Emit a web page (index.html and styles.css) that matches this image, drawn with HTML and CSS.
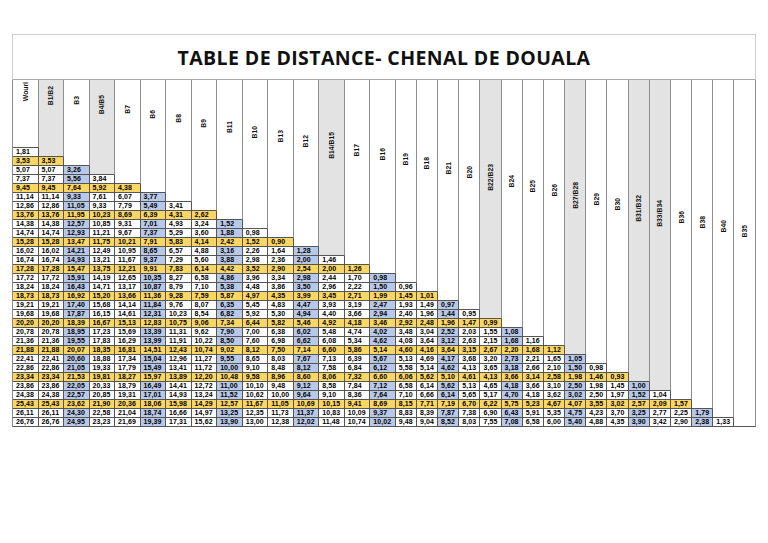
FILE: index.html
```html
<!DOCTYPE html>
<html lang="fr">
<head>
<meta charset="utf-8">
<title>Table de distance - Chenal de Douala</title>
<link rel="stylesheet" href="styles.css">
</head>
<body>
<div class="sheet">
  <div class="title">TABLE DE DISTANCE- CHENAL DE DOUALA</div>
  <div class="grid">
    <div class="h" style="--k:1"><span>Wouri</span></div>
    <div class="h g" style="--k:2"><span>B1/B2</span></div>
    <div class="h" style="--k:3"><span>B3</span></div>
    <div class="h g" style="--k:4"><span>B4/B5</span></div>
    <div class="h" style="--k:5"><span>B7</span></div>
    <div class="h" style="--k:6"><span>B6</span></div>
    <div class="h" style="--k:7"><span>B8</span></div>
    <div class="h" style="--k:8"><span>B9</span></div>
    <div class="h" style="--k:9"><span>B11</span></div>
    <div class="h" style="--k:10"><span>B10</span></div>
    <div class="h" style="--k:11"><span>B13</span></div>
    <div class="h" style="--k:12"><span>B12</span></div>
    <div class="h g" style="--k:13"><span>B14/B15</span></div>
    <div class="h" style="--k:14"><span>B17</span></div>
    <div class="h" style="--k:15"><span>B16</span></div>
    <div class="h" style="--k:16"><span>B19</span></div>
    <div class="h" style="--k:17"><span>B18</span></div>
    <div class="h" style="--k:18"><span>B21</span></div>
    <div class="h" style="--k:19"><span>B20</span></div>
    <div class="h g" style="--k:20"><span>B22/B23</span></div>
    <div class="h" style="--k:21"><span>B24</span></div>
    <div class="h" style="--k:22"><span>B25</span></div>
    <div class="h" style="--k:23"><span>B26</span></div>
    <div class="h g" style="--k:24"><span>B27/B28</span></div>
    <div class="h" style="--k:25"><span>B29</span></div>
    <div class="h" style="--k:26"><span>B30</span></div>
    <div class="h g" style="--k:27"><span>B31/B32</span></div>
    <div class="h g" style="--k:28"><span>B33/B34</span></div>
    <div class="h" style="--k:29"><span>B36</span></div>
    <div class="h" style="--k:30"><span>B38</span></div>
    <div class="h" style="--k:31"><span>B40</span></div>
    <div class="h" style="--k:32"><span>B35</span></div>

    <div class="row"><span>1,81</span></div>
    <div class="row y"><span>3,53</span><span>3,53</span></div>
    <div class="row"><span>5,07</span><span>5,07</span><span>3,26</span></div>
    <div class="row"><span>7,37</span><span>7,37</span><span>5,56</span><span>3,84</span></div>
    <div class="row y"><span>9,45</span><span>9,45</span><span>7,64</span><span>5,92</span><span>4,38</span></div>
    <div class="row"><span>11,14</span><span>11,14</span><span>9,33</span><span>7,61</span><span>6,07</span><span>3,77</span></div>
    <div class="row"><span>12,86</span><span>12,86</span><span>11,05</span><span>9,33</span><span>7,79</span><span>5,49</span><span>3,41</span></div>
    <div class="row y"><span>13,76</span><span>13,76</span><span>11,95</span><span>10,23</span><span>8,69</span><span>6,39</span><span>4,31</span><span>2,62</span></div>
    <div class="row"><span>14,38</span><span>14,38</span><span>12,57</span><span>10,85</span><span>9,31</span><span>7,01</span><span>4,93</span><span>3,24</span><span>1,52</span></div>
    <div class="row"><span>14,74</span><span>14,74</span><span>12,93</span><span>11,21</span><span>9,67</span><span>7,37</span><span>5,29</span><span>3,60</span><span>1,88</span><span>0,98</span></div>
    <div class="row y"><span>15,28</span><span>15,28</span><span>13,47</span><span>11,75</span><span>10,21</span><span>7,91</span><span>5,83</span><span>4,14</span><span>2,42</span><span>1,52</span><span>0,90</span></div>
    <div class="row"><span>16,02</span><span>16,02</span><span>14,21</span><span>12,49</span><span>10,95</span><span>8,65</span><span>6,57</span><span>4,88</span><span>3,16</span><span>2,26</span><span>1,64</span><span>1,28</span></div>
    <div class="row"><span>16,74</span><span>16,74</span><span>14,93</span><span>13,21</span><span>11,67</span><span>9,37</span><span>7,29</span><span>5,60</span><span>3,88</span><span>2,98</span><span>2,36</span><span>2,00</span><span>1,46</span></div>
    <div class="row y"><span>17,28</span><span>17,28</span><span>15,47</span><span>13,75</span><span>12,21</span><span>9,91</span><span>7,83</span><span>6,14</span><span>4,42</span><span>3,52</span><span>2,90</span><span>2,54</span><span>2,00</span><span>1,26</span></div>
    <div class="row"><span>17,72</span><span>17,72</span><span>15,91</span><span>14,19</span><span>12,65</span><span>10,35</span><span>8,27</span><span>6,58</span><span>4,86</span><span>3,96</span><span>3,34</span><span>2,98</span><span>2,44</span><span>1,70</span><span>0,98</span></div>
    <div class="row"><span>18,24</span><span>18,24</span><span>16,43</span><span>14,71</span><span>13,17</span><span>10,87</span><span>8,79</span><span>7,10</span><span>5,38</span><span>4,48</span><span>3,86</span><span>3,50</span><span>2,96</span><span>2,22</span><span>1,50</span><span>0,96</span></div>
    <div class="row y"><span>18,73</span><span>18,73</span><span>16,92</span><span>15,20</span><span>13,66</span><span>11,36</span><span>9,28</span><span>7,59</span><span>5,87</span><span>4,97</span><span>4,35</span><span>3,99</span><span>3,45</span><span>2,71</span><span>1,99</span><span>1,45</span><span>1,01</span></div>
    <div class="row"><span>19,21</span><span>19,21</span><span>17,40</span><span>15,68</span><span>14,14</span><span>11,84</span><span>9,76</span><span>8,07</span><span>6,35</span><span>5,45</span><span>4,83</span><span>4,47</span><span>3,93</span><span>3,19</span><span>2,47</span><span>1,93</span><span>1,49</span><span>0,97</span></div>
    <div class="row"><span>19,68</span><span>19,68</span><span>17,87</span><span>16,15</span><span>14,61</span><span>12,31</span><span>10,23</span><span>8,54</span><span>6,82</span><span>5,92</span><span>5,30</span><span>4,94</span><span>4,40</span><span>3,66</span><span>2,94</span><span>2,40</span><span>1,96</span><span>1,44</span><span>0,95</span></div>
    <div class="row y"><span>20,20</span><span>20,20</span><span>18,39</span><span>16,67</span><span>15,13</span><span>12,83</span><span>10,75</span><span>9,06</span><span>7,34</span><span>6,44</span><span>5,82</span><span>5,46</span><span>4,92</span><span>4,18</span><span>3,46</span><span>2,92</span><span>2,48</span><span>1,96</span><span>1,47</span><span>0,99</span></div>
    <div class="row"><span>20,78</span><span>20,78</span><span>18,95</span><span>17,23</span><span>15,69</span><span>13,39</span><span>11,31</span><span>9,62</span><span>7,90</span><span>7,00</span><span>6,38</span><span>6,02</span><span>5,48</span><span>4,74</span><span>4,02</span><span>3,48</span><span>3,04</span><span>2,52</span><span>2,03</span><span>1,55</span><span>1,08</span></div>
    <div class="row"><span>21,36</span><span>21,36</span><span>19,55</span><span>17,83</span><span>16,29</span><span>13,99</span><span>11,91</span><span>10,22</span><span>8,50</span><span>7,60</span><span>6,98</span><span>6,62</span><span>6,08</span><span>5,34</span><span>4,62</span><span>4,08</span><span>3,64</span><span>3,12</span><span>2,63</span><span>2,15</span><span>1,68</span><span>1,16</span></div>
    <div class="row y"><span>21,88</span><span>21,88</span><span>20,07</span><span>18,35</span><span>16,81</span><span>14,51</span><span>12,43</span><span>10,74</span><span>9,02</span><span>8,12</span><span>7,50</span><span>7,14</span><span>6,60</span><span>5,86</span><span>5,14</span><span>4,60</span><span>4,16</span><span>3,64</span><span>3,15</span><span>2,67</span><span>2,20</span><span>1,68</span><span>1,12</span></div>
    <div class="row"><span>22,41</span><span>22,41</span><span>20,60</span><span>18,88</span><span>17,34</span><span>15,04</span><span>12,96</span><span>11,27</span><span>9,55</span><span>8,65</span><span>8,03</span><span>7,67</span><span>7,13</span><span>6,39</span><span>5,67</span><span>5,13</span><span>4,69</span><span>4,17</span><span>3,68</span><span>3,20</span><span>2,73</span><span>2,21</span><span>1,65</span><span>1,05</span></div>
    <div class="row"><span>22,86</span><span>22,86</span><span>21,05</span><span>19,33</span><span>17,79</span><span>15,49</span><span>13,41</span><span>11,72</span><span>10,00</span><span>9,10</span><span>8,48</span><span>8,12</span><span>7,58</span><span>6,84</span><span>6,12</span><span>5,58</span><span>5,14</span><span>4,62</span><span>4,13</span><span>3,65</span><span>3,18</span><span>2,66</span><span>2,10</span><span>1,50</span><span>0,98</span></div>
    <div class="row y"><span>23,34</span><span>23,34</span><span>21,53</span><span>19,81</span><span>18,27</span><span>15,97</span><span>13,89</span><span>12,20</span><span>10,48</span><span>9,58</span><span>8,96</span><span>8,60</span><span>8,06</span><span>7,32</span><span>6,60</span><span>6,06</span><span>5,62</span><span>5,10</span><span>4,61</span><span>4,13</span><span>3,66</span><span>3,14</span><span>2,58</span><span>1,98</span><span>1,46</span><span>0,93</span></div>
    <div class="row"><span>23,86</span><span>23,86</span><span>22,05</span><span>20,33</span><span>18,79</span><span>16,49</span><span>14,41</span><span>12,72</span><span>11,00</span><span>10,10</span><span>9,48</span><span>9,12</span><span>8,58</span><span>7,84</span><span>7,12</span><span>6,58</span><span>6,14</span><span>5,62</span><span>5,13</span><span>4,65</span><span>4,18</span><span>3,66</span><span>3,10</span><span>2,50</span><span>1,98</span><span>1,45</span><span>1,00</span></div>
    <div class="row"><span>24,38</span><span>24,38</span><span>22,57</span><span>20,85</span><span>19,31</span><span>17,01</span><span>14,93</span><span>13,24</span><span>11,52</span><span>10,62</span><span>10,00</span><span>9,64</span><span>9,10</span><span>8,36</span><span>7,64</span><span>7,10</span><span>6,66</span><span>6,14</span><span>5,65</span><span>5,17</span><span>4,70</span><span>4,18</span><span>3,62</span><span>3,02</span><span>2,50</span><span>1,97</span><span>1,52</span><span>1,04</span></div>
    <div class="row y"><span>25,43</span><span>25,43</span><span>23,62</span><span>21,90</span><span>20,36</span><span>18,06</span><span>15,98</span><span>14,29</span><span>12,57</span><span>11,67</span><span>11,05</span><span>10,69</span><span>10,15</span><span>9,41</span><span>8,69</span><span>8,15</span><span>7,71</span><span>7,19</span><span>6,70</span><span>6,22</span><span>5,75</span><span>5,23</span><span>4,67</span><span>4,07</span><span>3,55</span><span>3,02</span><span>2,57</span><span>2,09</span><span>1,57</span></div>
    <div class="row"><span>26,11</span><span>26,11</span><span>24,30</span><span>22,58</span><span>21,04</span><span>18,74</span><span>16,66</span><span>14,97</span><span>13,25</span><span>12,35</span><span>11,73</span><span>11,37</span><span>10,83</span><span>10,09</span><span>9,37</span><span>8,83</span><span>8,39</span><span>7,87</span><span>7,38</span><span>6,90</span><span>6,43</span><span>5,91</span><span>5,35</span><span>4,75</span><span>4,23</span><span>3,70</span><span>3,25</span><span>2,77</span><span>2,25</span><span>1,79</span></div>
    <div class="row"><span>26,76</span><span>26,76</span><span>24,95</span><span>23,23</span><span>21,69</span><span>19,39</span><span>17,31</span><span>15,62</span><span>13,90</span><span>13,00</span><span>12,38</span><span>12,02</span><span>11,48</span><span>10,74</span><span>10,02</span><span>9,48</span><span>9,04</span><span>8,52</span><span>8,03</span><span>7,55</span><span>7,08</span><span>6,58</span><span>6,00</span><span>5,40</span><span>4,88</span><span>4,35</span><span>3,90</span><span>3,42</span><span>2,90</span><span>2,38</span><span>1,33</span></div>
  </div>
</div>
</body>
</html>
```

FILE: styles.css
```css
* { box-sizing: border-box; }

body {
  margin: 0;
  background: #ffffff;
  font-family: "Liberation Sans", Arial, sans-serif;
  color: #000;
}

.sheet {
  margin: 34px 0 0 12px;
  width: 744px;
}

.title {
  height: 46px;
  border: 1px solid #cfcfcf;
  border-bottom-color: #a8a8a8;
  display: flex;
  align-items: center;
  justify-content: center;
  font-family: "Open Sans", "Liberation Sans", sans-serif;
  font-weight: 700;
  font-size: 19.5px;
  letter-spacing: 0.4px;
  color: #111;
}

.grid {
  display: grid;
  grid-template-columns: repeat(15, 25.53px) repeat(17, 21.18px);
  grid-template-rows: 68px repeat(31, 9px);
  border-left: 1px solid #8a8a8a;
}

.h {
  grid-row: 1 / span var(--k);
  border-right: 1px solid #8e8e8e;
  border-bottom: 1px solid #555;
  background: #fff;
  display: flex;
  align-items: center;
  justify-content: center;
  padding-bottom: 44px;
}

.h.g { background: #e3e3e3; }

.h span {
  writing-mode: vertical-rl;
  transform: rotate(180deg);
  font-size: 6.8px;
  font-weight: 700;
  white-space: nowrap;
  color: #111;
}

.row { display: contents; }

.row > span {
  border-right: 1px solid #555;
  border-bottom: 1px solid #555;
  font-size: 7px;
  font-weight: 700;
  line-height: 8px;
  padding-left: 3px;
  white-space: nowrap;
  overflow: hidden;
  background: #fff;
  letter-spacing: 0.1px;
}

.row > span:nth-child(3n) { background: #b8c8e8; }

.row.y > span,
.row.y > span:nth-child(3n) { background: #fbd663; }
```
